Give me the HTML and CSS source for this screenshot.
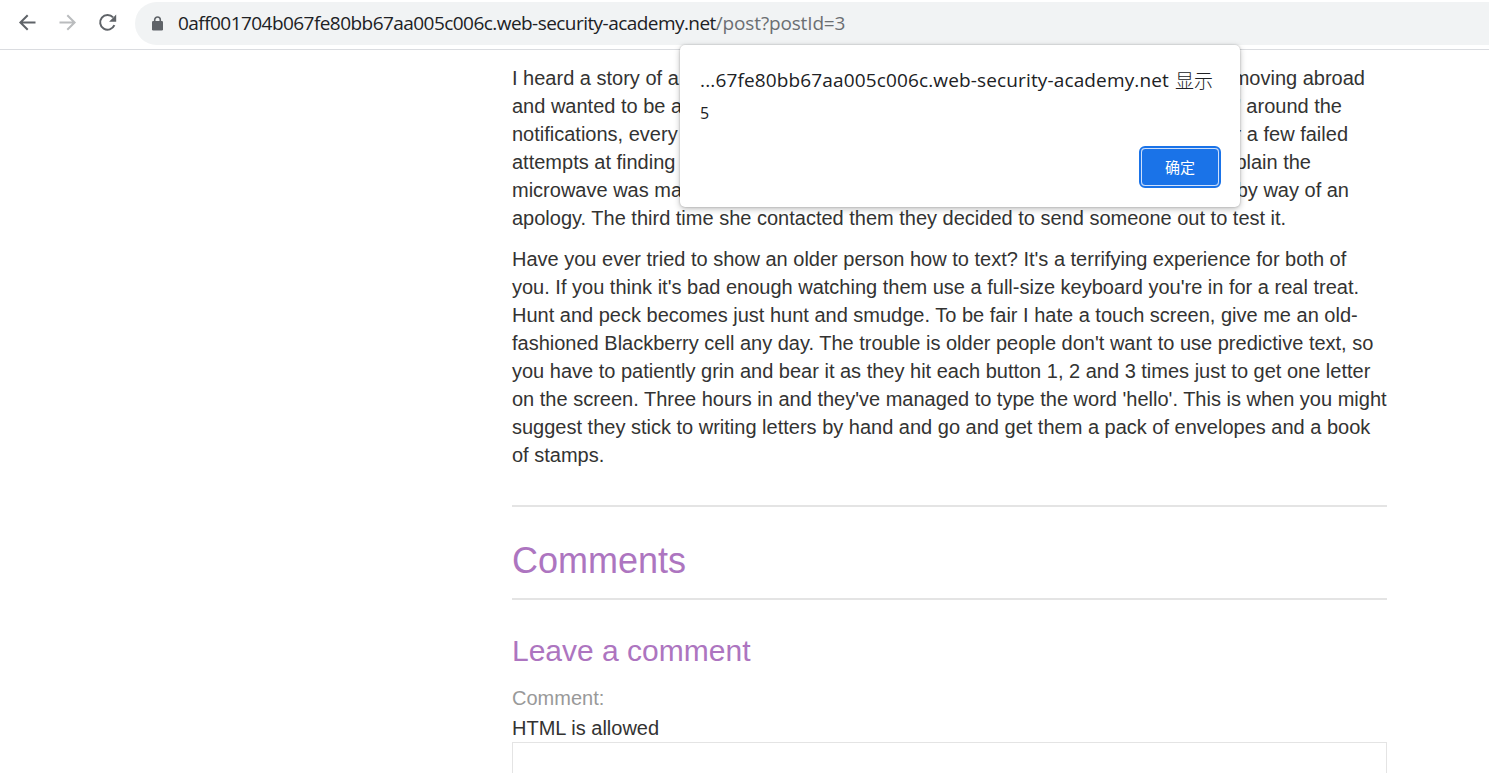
FILE: index.html
```html
<!DOCTYPE html>
<html lang="en">
<head>
<meta charset="utf-8">
<title>Post</title>
<link rel="stylesheet" href="styles.css">
</head>
<body>
<header class="toolbar">
  <nav class="nav">
    <svg width="20" height="20" viewBox="0 0 20 20" class="icon"><path d="M17.5 9.5H3M9.7 2.2L2.4 9.5L9.7 16.8"/></svg>
    <svg width="20" height="20" viewBox="0 0 20 20" class="icon disabled"><path d="M1.5 9.5H16M9.3 2.2L16.6 9.5L9.3 16.8"/></svg>
    <svg width="20" height="20" viewBox="0 0 20 20" class="icon"><path d="M15.1 4.4A7.4 7.4 0 1 0 16.4 12.2"/><path class="solid" d="M18.2 1.6V8.7H11.1Z"/></svg>
  </nav>
  <div class="address">
    <svg width="11" height="15" viewBox="0 0 11 15" class="lock"><rect x="0" y="5" width="11" height="9.5" rx="1.3"/><path d="M2.7 6V3.8a2.8 2.8 0 0 1 5.6 0V6"/></svg>
    <div class="url"><span class="host">0aff001704b067fe80bb67aa005c006c.web-security-academy.net</span><span class="path">/post?postId=3</span></div>
  </div>
</header>
<main class="page">
  <div class="story">
    <div class="line l1"><span>I heard a story of a</span><span>moving abroad</span></div>
    <div class="line l2"><span>and wanted to be a</span><span>' around the</span></div>
    <div class="line l3"><span>notifications, every</span><span>r a few failed</span></div>
    <div class="line l4"><span>attempts at finding</span><span>plain the</span></div>
    <div class="line l5"><span>microwave was ma</span><span>by way of an</span></div>
    <div class="line l6">apology. The third time she contacted them they decided to send someone out to test it.</div>
  </div>
  <p class="para">Have you ever tried to show an older person how to text? It's a terrifying experience for both of<br>you. If you think it's bad enough watching them use a full-size keyboard you're in for a real treat.<br>Hunt and peck becomes just hunt and smudge. To be fair I hate a touch screen, give me an old-<br>fashioned Blackberry cell any day. The trouble is older people don't want to use predictive text, so<br>you have to patiently grin and bear it as they hit each button 1, 2 and 3 times just to get one letter<br>on the screen. Three hours in and they've managed to type the word 'hello'. This is when you might<br>suggest they stick to writing letters by hand and go and get them a pack of envelopes and a book<br>of stamps.</p>
  <hr class="rule">
  <h1 class="comments">Comments</h1>
  <hr class="rule">
  <h2 class="leave">Leave a comment</h2>
  <label class="label">Comment:</label>
  <div class="hint">HTML is allowed</div>
  <div class="field"></div>
</main>
<section class="dialog">
  <div class="title"><span class="origin">...67fe80bb67aa005c006c.web-security-academy.net</span><span class="says">显示</span></div>
  <div class="message">5</div>
  <button class="ok">确定</button>
</section>
</body>
</html>
```
FILE: styles.css
```css
* { box-sizing: border-box; }
body { margin: 0; height: 773px; overflow: hidden; background: #fff; color: #333332; font: 20px/28px "Liberation Sans", Arial, sans-serif; }
.toolbar { display: flex; height: 50px; padding-top: 2px; border-bottom: 1px solid #dadce0; }
.nav { display: flex; gap: 20px; width: 135px; padding: 11px 0 0 18px; }
.icon { flex: none; fill: none; stroke: #5f6368; stroke-width: 2; }
.icon.disabled { stroke: #babcbe; }
.icon .solid { fill: #5f6368; stroke: none; }
.address { flex: 1; display: flex; align-items: center; height: 43px; padding-left: 17px; border-radius: 22px 0 0 22px; background: #f1f3f4; }
.lock { fill: #5f6368; stroke: none; }
.lock path { fill: none; stroke: #5f6368; stroke-width: 1.6; }
.url { margin: 0 0 2px 15px; font: 19px/28px "Open Sans", "Noto Sans", sans-serif; white-space: nowrap; }
.host { color: #202124; letter-spacing: -0.55px; }
.path { color: #6b6e72; letter-spacing: -0.15px; }
.page { width: 875px; margin-left: 512px; padding-top: 14px; }
.line { display: flex; justify-content: space-between; white-space: nowrap; }
.l1 { width: 853px; }
.l2 { width: 830px; }
.l3 { width: 836px; }
.l4 { width: 799px; }
.l5 { width: 837px; }
.para { margin: 13px 0 36px; white-space: nowrap; }
.rule { height: 2px; margin: 0; border: 0; background: #e4e4e4; }
.comments { margin: 33px 0 17px; color: #ad75c0; font-size: 36px; font-weight: 400; line-height: 41px; }
.leave { margin: 33px 0 16px; color: #ad75c0; font-size: 30px; font-weight: 400; line-height: 35px; }
.label { display: block; color: #999; line-height: 28px; }
.hint { margin-top: 2px; line-height: 28px; }
.field { height: 60px; border: 1px solid #e4e4e4; }
.dialog { position: absolute; left: 680px; top: 45px; width: 560px; height: 162px; padding: 21px 20px 0; border-radius: 5px; background: #fff; box-shadow: 0 0 2px rgba(0,0,0,.25), 0 2px 6px rgba(0,0,0,.25); color: #202124; font-family: "Open Sans", "Noto Sans CJK SC", sans-serif; }
.title { display: flex; justify-content: space-between; width: 513px; font-size: 19px; line-height: 28px; white-space: nowrap; }
.origin { letter-spacing: 0.14px; }
.says { font-family: "Noto Sans CJK SC", sans-serif; font-weight: 300; }
.message { margin-top: 6px; font-size: 16px; line-height: 26px; letter-spacing: -0.5px; }
.ok { display: block; width: 78px; height: 38px; margin: 22px 0 0 441px; padding: 0; border: 1px solid #cfe0fb; border-radius: 4px; outline: 2px solid #1a73e8; background: #1a73e8; color: #fff; font: 15px/34px "Noto Sans CJK SC", sans-serif; }
```
